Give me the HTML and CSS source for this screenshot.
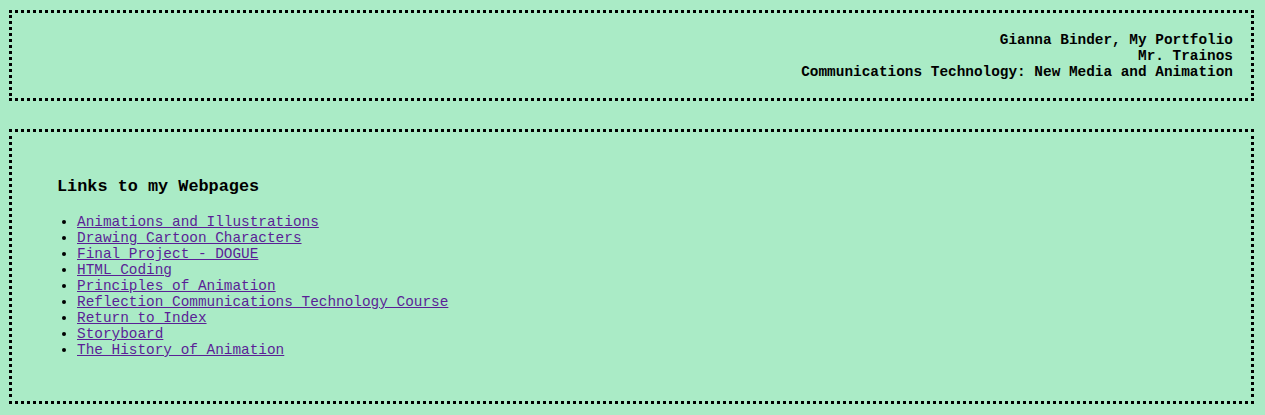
FILE: index.html
```html
<!DOCTYPE html>
<html>
<head>
<meta charset="utf-8">
<title>Gianna Binder, My Portfolio</title>
<link rel="stylesheet" href="styles.css">
</head>
<body>
<header class="banner">
  <p class="banner-line">Gianna Binder, My Portfolio</p>
  <p class="banner-line">Mr. Trainos</p>
  <p class="banner-line">Communications Technology: New Media and Animation</p>
</header>
<main class="content">
  <h3 class="content-title">Links to my Webpages</h3>
  <ul class="link-list">
    <li><a href="#">Animations and Illustrations</a></li>
    <li><a href="#">Drawing Cartoon Characters</a></li>
    <li><a href="#">Final Project - DOGUE</a></li>
    <li><a href="#">HTML Coding</a></li>
    <li><a href="#">Principles of Animation</a></li>
    <li><a href="#">Reflection Communications Technology Course</a></li>
    <li><a href="#">Return to Index</a></li>
    <li><a href="#">Storyboard</a></li>
    <li><a href="#">The History of Animation</a></li>
  </ul>
</main>
</body>
</html>
```
FILE: styles.css
```css
html {
  background: #aaebc6;
}
body {
  margin: 10px 11px 10px 9px;
  font-family: "Liberation Mono", "Courier New", monospace;
  font-size: 14.4px;
  color: #000;
}
.banner {
  border: 3px dotted #000;
  padding: 19px 18px 18px 19px;
  text-align: right;
  font-weight: bold;
}
.banner-line {
  margin: 0;
  line-height: 16px;
}
.content {
  margin-top: 28px;
  border: 3px dotted #000;
  padding: 28px 45px 30px;
}
.content-title {
  margin: 17px 0 18px;
  font-size: 16.85px;
  line-height: 19px;
  font-weight: bold;
}
.link-list {
  margin: 0 0 13px;
  padding-left: 20px;
}
.link-list li {
  line-height: 16px;
}
.link-list a {
  color: #5a1f96;
}
```
